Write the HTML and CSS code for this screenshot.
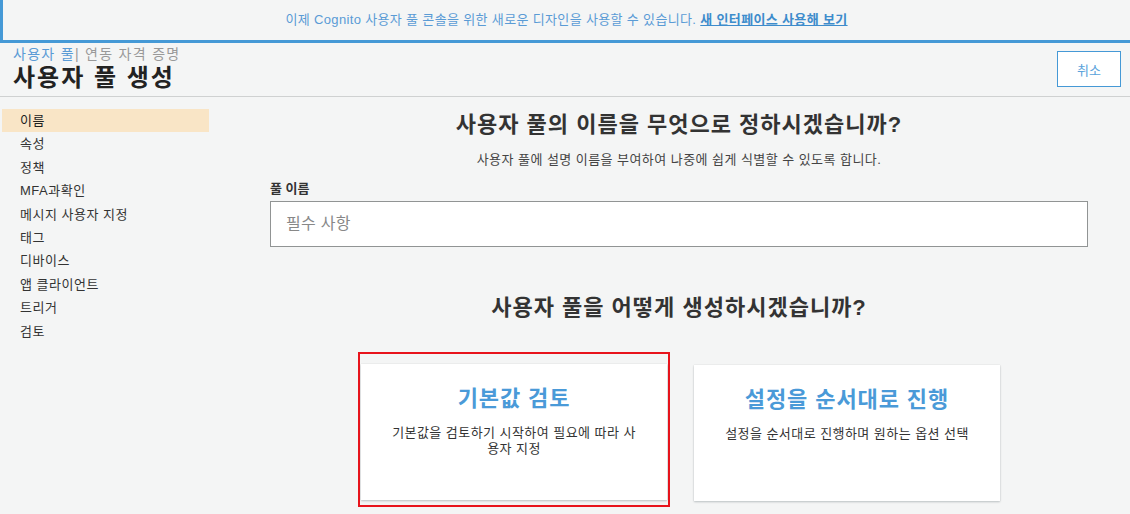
FILE: index.html
```html
<!DOCTYPE html>
<html lang="ko">
<head>
<meta charset="utf-8">
<title>사용자 풀 생성</title>
<link rel="stylesheet" href="styles.css">
</head>
<body>
<div class="banner">
  <span>이제 Cognito 사용자 풀 콘솔을 위한 새로운 디자인을 사용할 수 있습니다. <a class="banner-link" href="#">새 인터페이스 사용해 보기</a></span>
</div>
<header class="header">
  <div class="header-text">
    <div class="crumbs"><a class="crumb-link" href="#">사용자 풀</a><span class="crumb-sep">|</span> <span class="crumb-other">연동 자격 증명</span></div>
    <h1 class="page-title">사용자 풀 생성</h1>
  </div>
  <button class="cancel">취소</button>
</header>
<div class="layout">
  <nav class="sidebar">
    <div class="nav-item active">이름</div>
    <div class="nav-item">속성</div>
    <div class="nav-item">정책</div>
    <div class="nav-item">MFA과확인</div>
    <div class="nav-item">메시지 사용자 지정</div>
    <div class="nav-item">태그</div>
    <div class="nav-item">디바이스</div>
    <div class="nav-item">앱 클라이언트</div>
    <div class="nav-item">트리거</div>
    <div class="nav-item">검토</div>
  </nav>
  <main class="main">
    <h2 class="heading">사용자 풀의 이름을 무엇으로 정하시겠습니까?</h2>
    <p class="sub">사용자 풀에 설명 이름을 부여하여 나중에 쉽게 식별할 수 있도록 합니다.</p>
    <label class="label" for="pool">풀 이름</label>
    <input class="input" id="pool" type="text" placeholder="필수 사항">
    <h2 class="heading heading-2">사용자 풀을 어떻게 생성하시겠습니까?</h2>
    <div class="choices">
      <div class="selected">
        <div class="card">
          <div class="card-title">기본값 검토</div>
          <div class="card-desc">기본값을 검토하기 시작하여 필요에 따라 사용자 지정</div>
        </div>
      </div>
      <div class="card card-plain">
        <div class="card-title">설정을 순서대로 진행</div>
        <div class="card-desc">설정을 순서대로 진행하며 원하는 옵션 선택</div>
      </div>
    </div>
  </main>
</div>
</body>
</html>
```
FILE: styles.css
```css
* { box-sizing: border-box; }
html, body { margin: 0; padding: 0; }
body {
  background: #f4f5f5;
  font-family: "Liberation Sans", "Noto Sans CJK KR", sans-serif;
  color: #333;
  width: 1130px;
  height: 514px;
  overflow: hidden;
}
.banner {
  height: 43px;
  border-left: 3px solid #4599d6;
  border-bottom: 3px solid #4599d6;
  display: flex;
  align-items: center;
  justify-content: center;
  font-size: 13px;
  letter-spacing: 0.35px;
  color: #5a9bd5;
  padding-bottom: 4px;
}
.banner-link {
  color: #3d8ccc;
  font-weight: bold;
  text-decoration: underline;
}
.header {
  height: 54px;
  border-bottom: 1px solid #cfd1d1;
  display: flex;
  justify-content: space-between;
  align-items: flex-start;
  padding: 0 9px 0 13px;
}
.header-text {
  display: flex;
  flex-direction: column;
  margin-top: 2px;
}
.crumbs {
  font-size: 14px;
  line-height: 18px;
  letter-spacing: 1.3px;
  color: #999;
}
.crumb-link { color: #5a9bd5; text-decoration: none; }
.crumb-sep { color: #999; }
.page-title {
  margin: 0;
  font-size: 24px;
  line-height: 30px;
  font-weight: bold;
  color: #222;
  letter-spacing: 2px;
}
.cancel {
  margin-top: 8px;
  width: 64px;
  height: 36px;
  background: #fff;
  border: 1px solid #4599d6;
  color: #5aa3db;
  font-family: inherit;
  font-size: 13px;
  padding: 0;
}
.layout {
  display: flex;
  padding-top: 12px;
}
.sidebar {
  width: 207px;
  margin-left: 2px;
  display: flex;
  flex-direction: column;
}
.nav-item {
  height: 23.4px;
  line-height: 23.4px;
  padding-left: 18px;
  font-size: 13px;
  letter-spacing: 0.5px;
  color: #333;
}
.nav-item.active { background: #f9e5c6; color: #222; }
.main {
  width: 818px;
  margin-left: 61px;
  display: flex;
  flex-direction: column;
}
.heading {
  margin: 0;
  font-size: 22px;
  line-height: 32px;
  font-weight: bold;
  letter-spacing: 1px;
  text-align: center;
  color: #333;
}
.sub {
  margin: 10px 0 0;
  font-size: 13px;
  line-height: 18px;
  letter-spacing: 0.45px;
  text-align: center;
  color: #444;
}
.label {
  margin-top: 11px;
  font-size: 13px;
  line-height: 18px;
  font-weight: bold;
  color: #333;
}
.input {
  margin-top: 3px;
  height: 46px;
  width: 100%;
  border: 1px solid #919494;
  background: #fff;
  padding: 0 15px;
  font-family: inherit;
  font-size: 16px;
  letter-spacing: 0.3px;
  color: #333;
  outline: none;
}
.input::placeholder { color: #888; }
.heading-2 { margin-top: 45px; }
.choices {
  margin-top: 28px;
  display: flex;
  justify-content: center;
  align-items: flex-start;
  gap: 24px;
}
.selected {
  border: 2px solid #e8141c;
  padding: 10px 1px 5px 1px;
}
.card {
  width: 306px;
  height: 136px;
  background: #fff;
  box-shadow: 0 1px 2px rgba(0, 28, 36, 0.22), 0 0 1px rgba(0, 28, 36, 0.12);
  padding: 21px 25px 0;
  text-align: center;
}
.card-plain { margin-top: 13px; }
.card-title {
  font-size: 22px;
  line-height: 28px;
  font-weight: bold;
  letter-spacing: 0.9px;
  color: #4a9ad8;
}
.card-desc {
  margin-top: 12px;
  font-size: 13px;
  line-height: 16px;
  letter-spacing: 0.45px;
  color: #333;
}
```
